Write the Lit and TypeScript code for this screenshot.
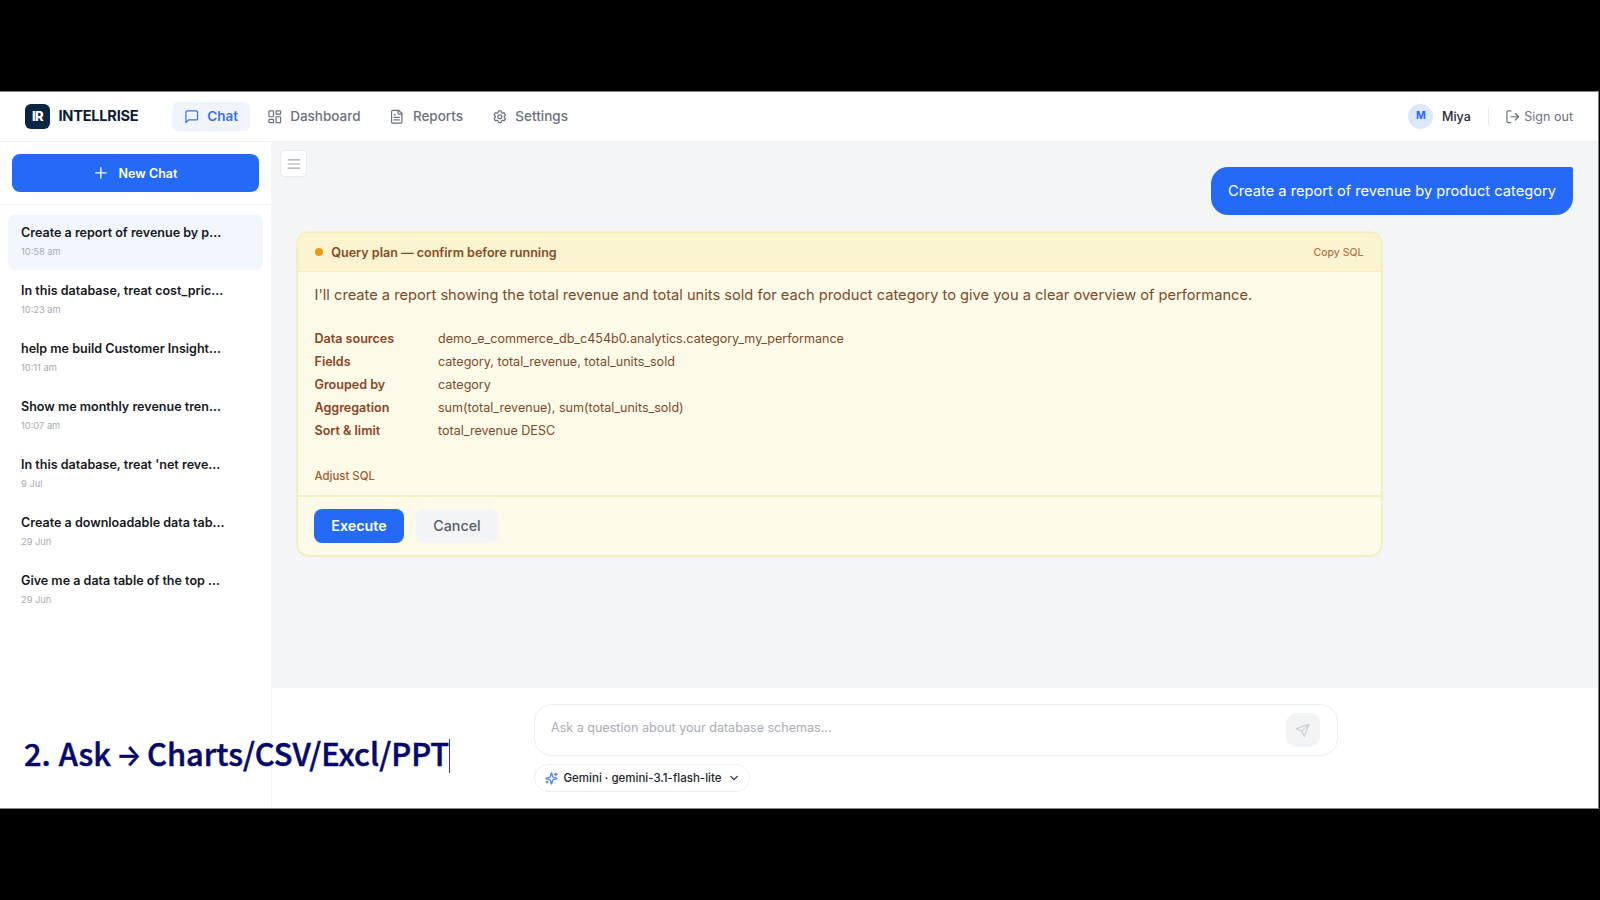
import { LitElement, html, css, svg, type PropertyDeclarations, type SVGTemplateResult } from 'lit'

interface Conversation {
  title: string
  time: string
}

const conversations: Conversation[] = [
  { title: 'Create a report of revenue by p…', time: '10:58 am' },
  { title: 'In this database, treat cost_pric…', time: '10:23 am' },
  { title: 'help me build Customer Insight…', time: '10:11 am' },
  { title: 'Show me monthly revenue tren…', time: '10:07 am' },
  { title: "In this database, treat 'net reve…", time: '9 Jul' },
  { title: 'Create a downloadable data tab…', time: '29 Jun' },
  { title: 'Give me a data table of the top …', time: '29 Jun' },
]

const planRows: [string, string][] = [
  ['Data sources', 'demo_e_commerce_db_c454b0.analytics.category_my_performance'],
  ['Fields', 'category, total_revenue, total_units_sold'],
  ['Grouped by', 'category'],
  ['Aggregation', 'sum(total_revenue), sum(total_units_sold)'],
  ['Sort & limit', 'total_revenue DESC'],
]

// 24x24 stroke icons
const icons: Record<string, SVGTemplateResult> = {
  chat: svg`<path d="M21 15a2 2 0 0 1-2 2H7l-4 4V5a2 2 0 0 1 2-2h14a2 2 0 0 1 2 2z" />`,
  dashboard: svg`
    <rect x="3" y="3" width="7" height="9" rx="1" />
    <rect x="14" y="3" width="7" height="5" rx="1" />
    <rect x="14" y="12" width="7" height="9" rx="1" />
    <rect x="3" y="16" width="7" height="5" rx="1" />`,
  reports: svg`
    <path d="M15 2H6a2 2 0 0 0-2 2v16a2 2 0 0 0 2 2h12a2 2 0 0 0 2-2V7z" />
    <path d="M14 2v4a2 2 0 0 0 2 2h4M10 9H8M16 13H8M16 17H8" />`,
  settings: svg`
    <path d="M9.594 3.94c.09-.542.56-.94 1.11-.94h2.593c.55 0 1.02.398 1.11.94l.213 1.281c.063.374.313.686.645.87.074.04.147.083.22.127.325.196.72.257 1.075.124l1.217-.456a1.125 1.125 0 0 1 1.37.49l1.296 2.247a1.125 1.125 0 0 1-.26 1.431l-1.003.827c-.293.241-.438.613-.43.992a7.723 7.723 0 0 1 0 .255c-.008.378.137.75.43.991l1.004.827c.424.35.534.955.26 1.43l-1.298 2.247a1.125 1.125 0 0 1-1.369.491l-1.217-.456c-.355-.133-.75-.072-1.076.124a6.47 6.47 0 0 1-.22.128c-.331.183-.581.495-.644.869l-.213 1.281c-.09.543-.56.94-1.11.94h-2.594c-.55 0-1.019-.398-1.11-.94l-.213-1.281c-.062-.374-.312-.686-.644-.87a6.52 6.52 0 0 1-.22-.127c-.325-.196-.72-.257-1.076-.124l-1.217.456a1.125 1.125 0 0 1-1.369-.49l-1.297-2.247a1.125 1.125 0 0 1 .26-1.431l1.004-.827c.292-.24.437-.613.43-.991a6.932 6.932 0 0 1 0-.255c.007-.38-.138-.751-.43-.992l-1.004-.827a1.125 1.125 0 0 1-.26-1.43l1.297-2.247a1.125 1.125 0 0 1 1.37-.491l1.216.456c.356.133.751.072 1.076-.124.072-.044.146-.086.22-.128.332-.183.582-.495.644-.869l.214-1.28Z" />
    <circle cx="12" cy="12" r="3" />`,
  signOut: svg`<path d="M9 21H5a2 2 0 0 1-2-2V5a2 2 0 0 1 2-2h4M16 17l5-5-5-5M21 12H9" />`,
  plus: svg`<path d="M12 4v16M4 12h16" />`,
  menu: svg`<path d="M2 5h20M2 12h20M2 19h20" />`,
  send: svg`<path d="M22 2 15 22l-4-9-9-4zM22 2 11 13" />`,
  sparkles: svg`
    <path d="M9.94 15.5A2 2 0 0 0 8.5 14.06l-6.14-1.58a.5.5 0 0 1 0-.96L8.5 9.94A2 2 0 0 0 9.94 8.5l1.58-6.14a.5.5 0 0 1 .96 0L14.06 8.5a2 2 0 0 0 1.44 1.44l6.14 1.58a.5.5 0 0 1 0 .96l-6.14 1.58a2 2 0 0 0-1.44 1.44l-1.58 6.14a.5.5 0 0 1-.96 0z" />
    <path d="M20 2v5M22.5 4.5h-5M4 17v3M5.5 18.5h-3" />`,
  chevron: svg`<path d="m4 8 8 8 8-8" />`,
}

const icon = (name: string) => html`<svg class="icon ${name}" viewBox="0 0 24 24">${icons[name]}</svg>`

/**
 * Top bar with brand, main navigation and account actions.
 */
export class NavBar extends LitElement {
  static styles = css`
    :host {
      display: flex;
      align-items: center;
      height: 49px;
      padding: 0 25px;
      margin-bottom: -1px;
      border-bottom: 1px solid #eef0f2;
      background: #fff;
    }
    .icon {
      width: 15.5px;
      height: 15.5px;
      fill: none;
      stroke: currentColor;
      stroke-width: 1.9;
      stroke-linecap: round;
      stroke-linejoin: round;
    }
    .logo {
      width: 25px;
      height: 25px;
      border-radius: 6px;
      background: #0b2545;
      color: #fff;
      font-size: 13px;
      font-weight: 800;
      letter-spacing: -0.6px;
      line-height: 25px;
      text-align: center;
    }
    .brand {
      margin-left: 8.5px;
      width: 113px;
      padding-bottom: 1px;
      color: #0b1b36;
      font-size: 14.64px;
      font-weight: 700;
      letter-spacing: -0.27px;
    }
    nav {
      display: flex;
      gap: 4.2px;
    }
    .tab {
      display: flex;
      align-items: center;
      gap: 8px;
      height: 29.5px;
      padding: 0 12.4px 0 12.2px;
      border-radius: 6px;
      color: #6b7280;
      font-size: 13.5px;
      font-weight: 500;
    }
    .tab span {
      padding-bottom: 1.5px;
    }
    .tab.active {
      background: #eff4ff;
      color: #3b72ee;
      font-weight: 600;
    }
    .account {
      display: flex;
      align-items: center;
      margin-left: auto;
      font-size: 12.55px;
    }
    .avatar {
      width: 25px;
      height: 25px;
      border-radius: 50%;
      background: #dce8fb;
      color: #2c66ee;
      font-size: 10.5px;
      font-weight: 700;
      line-height: 24px;
      text-align: center;
    }
    .name {
      margin-left: 8.5px;
      color: #1f2937;
      font-weight: 500;
    }
    .divider {
      width: 1px;
      height: 17px;
      margin: 0 16.3px 0 16.8px;
      background: #e8eaed;
    }
    .sign-out {
      display: flex;
      align-items: center;
      gap: 3.8px;
      color: #6b7280;
    }
  `

  static properties: PropertyDeclarations = {
    user: { type: String },
    active: { type: String },
  }

  user = ''
  active = 'Chat'

  renderTab(name: string, label: string) {
    return html`<a class="tab ${this.active === label ? 'active' : ''}">${icon(name)}<span>${label}</span></a>`
  }

  render() {
    return html`
      <div class="logo">IR</div>
      <div class="brand">INTELLRISE</div>
      <nav>
        ${this.renderTab('chat', 'Chat')} ${this.renderTab('dashboard', 'Dashboard')}
        ${this.renderTab('reports', 'Reports')} ${this.renderTab('settings', 'Settings')}
      </nav>
      <div class="account">
        <div class="avatar">${this.user.charAt(0)}</div>
        <span class="name">${this.user}</span>
        <span class="divider"></span>
        <a class="sign-out">${icon('signOut')}<span>Sign out</span></a>
      </div>
    `
  }
}

/**
 * Conversation history on the left.
 */
export class ChatSidebar extends LitElement {
  static styles = css`
    :host {
      display: block;
      box-sizing: border-box;
      width: 272px;
      border-right: 1px solid #f6f7f9;
    }
    .top {
      padding: 13px 12.5px 12px 12.3px;
      border-bottom: 1px solid #f1f2f4;
    }
    .new-chat {
      display: flex;
      align-items: center;
      justify-content: center;
      gap: 9.5px;
      height: 38px;
      border-radius: 8px;
      background: #256af6;
      color: #fff;
      font-size: 12.5px;
      font-weight: 600;
    }
    .icon {
      width: 15.7px;
      height: 15.7px;
      fill: none;
      stroke: currentColor;
      stroke-width: 2;
      stroke-linecap: round;
    }
    .list {
      display: flex;
      flex-direction: column;
      gap: 2px;
      padding: 9px 8px;
    }
    .item {
      box-sizing: border-box;
      height: 56px;
      padding: 9.5px 13px;
      border-radius: 8px;
    }
    .item.active {
      background: #f2f6ff;
    }
    .title {
      color: #16181d;
      font-size: 12.54px;
      font-weight: 600;
      line-height: 17px;
      white-space: nowrap;
    }
    .time {
      margin-top: 4.5px;
      color: #a7abb2;
      font-size: 9.3px;
      line-height: 13px;
    }
  `

  render() {
    return html`
      <div class="top">
        <div class="new-chat">${icon('plus')}<span>New Chat</span></div>
      </div>
      <div class="list">
        ${conversations.map(
          (item, index) => html`
            <div class="item ${index === 0 ? 'active' : ''}">
              <div class="title">${item.title}</div>
              <div class="time">${item.time}</div>
            </div>
          `
        )}
      </div>
    `
  }
}

/**
 * Card that shows the generated plan and asks for confirmation.
 */
export class QueryPlan extends LitElement {
  static styles = css`
    :host {
      display: block;
      box-sizing: border-box;
      width: 1085px;
      border: 1px solid #f3edb4;
      border-radius: 12px;
      background: #fdfae9;
      box-shadow: 0 0 0 0.5px #f3edb4, 0 1px 2px rgba(0, 0, 0, 0.04);
      overflow: hidden;
      color: #7f4a2a;
      font-size: 12.55px;
    }
    .head {
      display: flex;
      align-items: center;
      height: 38px;
      padding: 0 17px;
      border-bottom: 1px solid #f5eebb;
      background: #faf4d1;
    }
    .dot {
      width: 8px;
      height: 8px;
      margin-right: 8.8px;
      border-radius: 50%;
      background: #ee9a0c;
    }
    .label {
      color: #8a4a24;
      font-weight: 600;
    }
    .copy {
      margin-left: auto;
      color: #b5754a;
      font-size: 10.5px;
      font-weight: 500;
    }
    .summary {
      height: 45px;
      padding: 0 17px;
      border-bottom: 1px solid #fdfbe3;
      font-size: 14.65px;
      line-height: 46px;
      white-space: nowrap;
    }
    dl {
      display: grid;
      grid-template-columns: 123.5px 1fr;
      row-gap: 4px;
      margin: 0;
      padding: 11px 17px 13px;
      border-bottom: 1px solid #fefbdd;
      line-height: 19px;
    }
    dt {
      color: #8a4522;
      font-weight: 600;
    }
    dd {
      margin: 0;
    }
    .adjust {
      height: 40.5px;
      padding: 0 17px;
      border-bottom: 2px solid #f4efbd;
      color: #a85a2e;
      font-size: 11.4px;
      font-weight: 500;
      line-height: 44px;
    }
    .actions {
      display: flex;
      gap: 12px;
      padding: 12px 16.5px 12.5px;
    }
    .button {
      display: flex;
      align-items: center;
      justify-content: center;
      width: 90px;
      height: 34px;
      border-radius: 8px;
      background: #256af6;
      color: #fff;
      font-size: 14.3px;
      font-weight: 600;
    }
    .button.secondary {
      width: 82px;
      background: #f3f4f6;
      color: #555e6b;
      font-weight: 500;
    }
  `

  render() {
    return html`
      <div class="head">
        <span class="dot"></span>
        <span class="label">Query plan — confirm before running</span>
        <a class="copy">Copy SQL</a>
      </div>
      <div class="summary">
        I'll create a report showing the total revenue and total units sold for each product category to give you a
        clear overview of performance.
      </div>
      <dl>
        ${planRows.map(
          ([term, value]) => html`
            <dt>${term}</dt>
            <dd>${value}</dd>
          `
        )}
      </dl>
      <div class="adjust">Adjust SQL</div>
      <div class="actions">
        <div class="button">Execute</div>
        <div class="button secondary">Cancel</div>
      </div>
    `
  }
}

/**
 * Prompt input with the model picker below it.
 */
export class ChatComposer extends LitElement {
  static styles = css`
    :host {
      display: flex;
      flex-direction: column;
      box-sizing: border-box;
      height: 120px;
      padding: 16px 0 0 261.5px;
    }
    .icon {
      fill: none;
      stroke: currentColor;
      stroke-width: 2;
      stroke-linecap: round;
      stroke-linejoin: round;
    }
    .input {
      display: flex;
      align-items: center;
      box-sizing: border-box;
      width: 804px;
      height: 52px;
      padding: 0 17px 0 16.5px;
      border: 1px solid #eceef0;
      border-radius: 18px;
      box-shadow: 0 1px 1px rgba(0, 0, 0, 0.03);
    }
    .placeholder {
      flex: 1;
      padding-bottom: 5px;
      color: #a9adb4;
      font-size: 12.55px;
    }
    .submit {
      display: flex;
      align-items: center;
      justify-content: center;
      width: 34px;
      height: 34px;
      border-radius: 11px;
      background: #f3f4f6;
      color: #cdd0d5;
    }
    .send {
      width: 15px;
      height: 15px;
    }
    .model {
      display: flex;
      align-items: center;
      box-sizing: border-box;
      width: 216px;
      height: 28px;
      margin-top: 8px;
      padding: 0 10px;
      border: 1px solid #eceef0;
      border-radius: 14px;
      color: #23262c;
      font-size: 11.5px;
      font-weight: 500;
    }
    .sparkles {
      width: 13px;
      height: 13px;
      margin-right: 6px;
      color: #4a86f0;
      stroke-width: 2.4;
    }
    .chevron {
      width: 10px;
      height: 10px;
      margin-left: auto;
      stroke-width: 2.8;
    }
  `

  render() {
    return html`
      <div class="input">
        <span class="placeholder">Ask a question about your database schemas...</span>
        <span class="submit">${icon('send')}</span>
      </div>
      <div class="model">${icon('sparkles')}<span>Gemini · gemini-3.1-flash-lite</span>${icon('chevron')}</div>
    `
  }
}

export class AppRoot extends LitElement {
  static styles = css`
    :host {
      display: block;
      box-sizing: border-box;
      height: 900px;
      padding: 91px 1px 91px 0;
      background: #000;
      font-family: Inter, 'Liberation Sans', sans-serif;
      line-height: normal;
      overflow: hidden;
    }
    .window {
      display: flex;
      flex-direction: column;
      position: relative;
      box-sizing: border-box;
      height: 718px;
      border: 1px solid #858585;
      border-left: 0;
      background: #fff;
    }
    nav-bar {
      z-index: 1;
    }
    .body {
      display: flex;
      flex: 1;
      min-height: 0;
    }
    main {
      display: flex;
      flex: 1;
      flex-direction: column;
    }
    .thread {
      display: flex;
      flex: 1;
      flex-direction: column;
      align-items: flex-start;
      background: #f3f5f7;
    }
    .menu-button {
      display: flex;
      align-items: center;
      justify-content: center;
      position: absolute;
      top: 58px;
      left: 280.4px;
      box-sizing: border-box;
      width: 27px;
      height: 27px;
      border: 1px solid #e9ebee;
      border-radius: 4px;
      background: #fff;
      color: #a2a6ad;
    }
    .menu {
      width: 14px;
      height: 14px;
      fill: none;
      stroke: currentColor;
      stroke-width: 2;
      stroke-linecap: round;
    }
    .bubble {
      align-self: flex-end;
      margin: 26px 25px 17px 0;
      padding: 0 17px;
      border-radius: 17px 2px 17px 17px;
      background: #256af6;
      color: #fff;
      font-size: 14.66px;
      line-height: 48px;
    }
    query-plan {
      margin-left: 24.5px;
    }
    .caption {
      display: flex;
      align-items: center;
      position: absolute;
      top: 639px;
      left: 24px;
      color: #06096b;
      font-family: 'Noto Sans CJK SC', sans-serif;
      font-size: 30.8px;
      font-weight: 500;
      line-height: 44px;
      white-space: nowrap;
      word-spacing: 1px;
      -webkit-text-stroke: 0.5px #06096b;
    }
    .arrow {
      display: inline-block;
      width: 36px;
      font-family: Inter, sans-serif;
      text-align: center;
      transform: translateY(2px) scaleX(0.86);
    }
    .caret {
      width: 1px;
      height: 34px;
      margin-top: 6px;
      background: #3b3d8c;
    }
  `

  render() {
    return html`
      <div class="window">
        <nav-bar user="Miya"></nav-bar>
        <div class="body">
          <chat-sidebar></chat-sidebar>
          <main>
            <div class="thread">
              <div class="bubble">Create a report of revenue by product category</div>
              <query-plan></query-plan>
            </div>
            <chat-composer></chat-composer>
          </main>
        </div>
        <div class="menu-button">${icon('menu')}</div>
        <div class="caption">
          <span>2. Ask</span><span class="arrow">→</span><span>Charts/CSV/Excl/PPT</span><span class="caret"></span>
        </div>
      </div>
    `
  }
}

customElements.define('nav-bar', NavBar)
customElements.define('chat-sidebar', ChatSidebar)
customElements.define('query-plan', QueryPlan)
customElements.define('chat-composer', ChatComposer)
customElements.define('app-root', AppRoot)
